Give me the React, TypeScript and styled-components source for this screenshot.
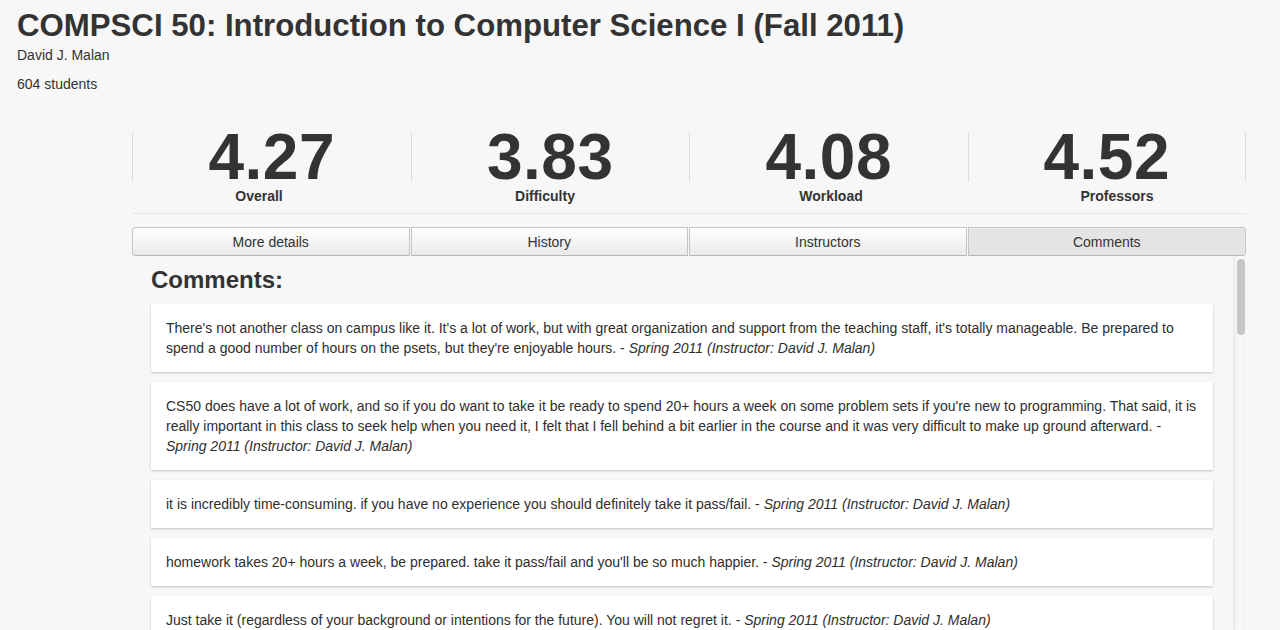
import styled, { createGlobalStyle } from 'styled-components';

const GlobalStyle = createGlobalStyle`
  html, body {
    margin: 0;
    padding: 0;
    background: #f7f7f7;
    color: #333;
    font-family: "Liberation Sans", Arial, Helvetica, sans-serif;
    overflow: hidden;
  }
`;

const Page = styled.div`
  width: 1280px;
  height: 630px;
  box-sizing: border-box;
  padding: 8px 0 0 17px;
  overflow: hidden;
`;
const Title = styled.h1`
  margin: 0;
  font-size: 31.2px;
  line-height: 36px;
  font-weight: bold;
  color: #333;
`;
const Sub = styled.p`
  margin: 2px 0 0;
  font-size: 14px;
  line-height: 18px;
`;
const Count = styled.p`
  margin: 11px 0 0;
  font-size: 14px;
  line-height: 18px;
`;
const Panel = styled.div`
  margin: 39px 0 0 115px;
  width: 1114px;
`;
const Stats = styled.div`
  padding-bottom: 8px;
  border-bottom: 1px solid #e6e6e6;
`;
const NumberRow = styled.div`
  display: grid;
  grid-template-columns: repeat(4, 1fr);
`;
const Number = styled.div<{ $last?: boolean }>`
  text-align: center;
  font-size: 64px;
  line-height: 50px;
  height: 50px;
  font-weight: bold;
  letter-spacing: 0.5px;
  color: #333;
  border-left: 1px solid #dcdcdc;
  border-right: ${p => (p.$last ? '1px solid #dcdcdc' : 'none')};
`;
/* the labels sit on a slightly wider grid than the numbers */
const LabelRow = styled.div`
  display: grid;
  grid-template-columns: repeat(4, 1fr);
  margin: 5px -14px 0 -16px;
`;
const Label = styled.div`
  text-align: center;
  font-size: 14px;
  font-weight: bold;
  line-height: 18px;
`;
const Tabs = styled.div`
  display: grid;
  grid-template-columns: repeat(4, 1fr);
  margin-top: 13px;
`;
const Tab = styled.button<{ $active?: boolean; $pos: 'first' | 'mid' | 'last' }>`
  height: 29px;
  font-family: "Liberation Sans", Arial, sans-serif;
  font-size: 14px;
  color: #333;
  border: 1px solid #c4c4c4;
  border-bottom-color: #b5b5b5;
  margin-right: ${p => (p.$pos === 'last' ? '0' : '1px')};
  background: ${p => (p.$active ? '#e4e4e4' : 'linear-gradient(#ffffff, #e9e9e9)')};
  box-shadow: inset 0 1px 0 ${p => (p.$active ? '#ececec' : '#fff')};
  border-radius: ${p =>
    p.$pos === 'first' ? '4px 0 0 4px' : p.$pos === 'last' ? '0 4px 4px 0' : '0'};
  padding: 0;
  cursor: pointer;
`;
const Scroller = styled.div`
  display: flex;
  height: 380px;
`;
const Content = styled.div`
  flex: 1;
  padding: 10px 20px 0 19px;
`;
const Heading = styled.h2`
  margin: 0 0 10px;
  font-size: 24px;
  line-height: 28px;
  font-weight: bold;
  color: #333;
`;
const Card = styled.div`
  background: #fff;
  padding: 14px 15px;
  margin-bottom: 10px;
  font-size: 14px;
  line-height: 20px;
  color: #2e2e2e;
  box-shadow: 0 1px 2px rgba(0, 0, 0, 0.22);
`;
const Term = styled.em`
  font-style: italic;
`;
const Track = styled.div`
  width: 13px;
  border-left: 1px solid #e8e8e8;
  background: linear-gradient(90deg, #ededed, #f9f9f9 40%, #f4f4f4);
  padding: 3px 2px 0 3px;
  box-sizing: border-box;
`;
const Thumb = styled.div`
  width: 8px;
  height: 76px;
  border-radius: 4px;
  background: #c6c6c6;
`;

const stats = [
  { value: '4.27', label: 'Overall' },
  { value: '3.83', label: 'Difficulty' },
  { value: '4.08', label: 'Workload' },
  { value: '4.52', label: 'Professors' },
];

const tabs = ['More details', 'History', 'Instructors', 'Comments'];

const term = 'Spring 2011 (Instructor: David J. Malan)';

const comments = [
  "There's not another class on campus like it. It's a lot of work, but with great organization and support from the teaching staff, it's totally manageable. Be prepared to spend a good number of hours on the psets, but they're enjoyable hours.",
  "CS50 does have a lot of work, and so if you do want to take it be ready to spend 20+ hours a week on some problem sets if you're new to programming. That said, it is really important in this class to seek help when you need it, I felt that I fell behind a bit earlier in the course and it was very difficult to make up ground afterward.",
  'it is incredibly time-consuming. if you have no experience you should definitely take it pass/fail.',
  "homework takes 20+ hours a week, be prepared. take it pass/fail and you'll be so much happier.",
  'Just take it (regardless of your background or intentions for the future). You will not regret it.',
  'Be prepared to work hard, but it is worth it.',
];

export default function App() {
  return (
    <Page>
      <GlobalStyle />
      <Title>COMPSCI 50: Introduction to Computer Science I (Fall 2011)</Title>
      <Sub>David J. Malan</Sub>
      <Count>604 students</Count>
      <Panel>
        <Stats>
          <NumberRow>
            {stats.map((s, i) => (
              <Number key={s.label} $last={i === stats.length - 1}>
                {s.value}
              </Number>
            ))}
          </NumberRow>
          <LabelRow>
            {stats.map(s => (
              <Label key={s.label}>{s.label}</Label>
            ))}
          </LabelRow>
        </Stats>
        <Tabs>
          {tabs.map((t, i) => (
            <Tab
              key={t}
              $active={t === 'Comments'}
              $pos={i === 0 ? 'first' : i === tabs.length - 1 ? 'last' : 'mid'}
            >
              {t}
            </Tab>
          ))}
        </Tabs>
        <Scroller>
          <Content>
            <Heading>Comments:</Heading>
            {comments.map(c => (
              <Card key={c}>
                {c} - <Term>{term}</Term>
              </Card>
            ))}
          </Content>
          <Track>
            <Thumb />
          </Track>
        </Scroller>
      </Panel>
    </Page>
  );
}
